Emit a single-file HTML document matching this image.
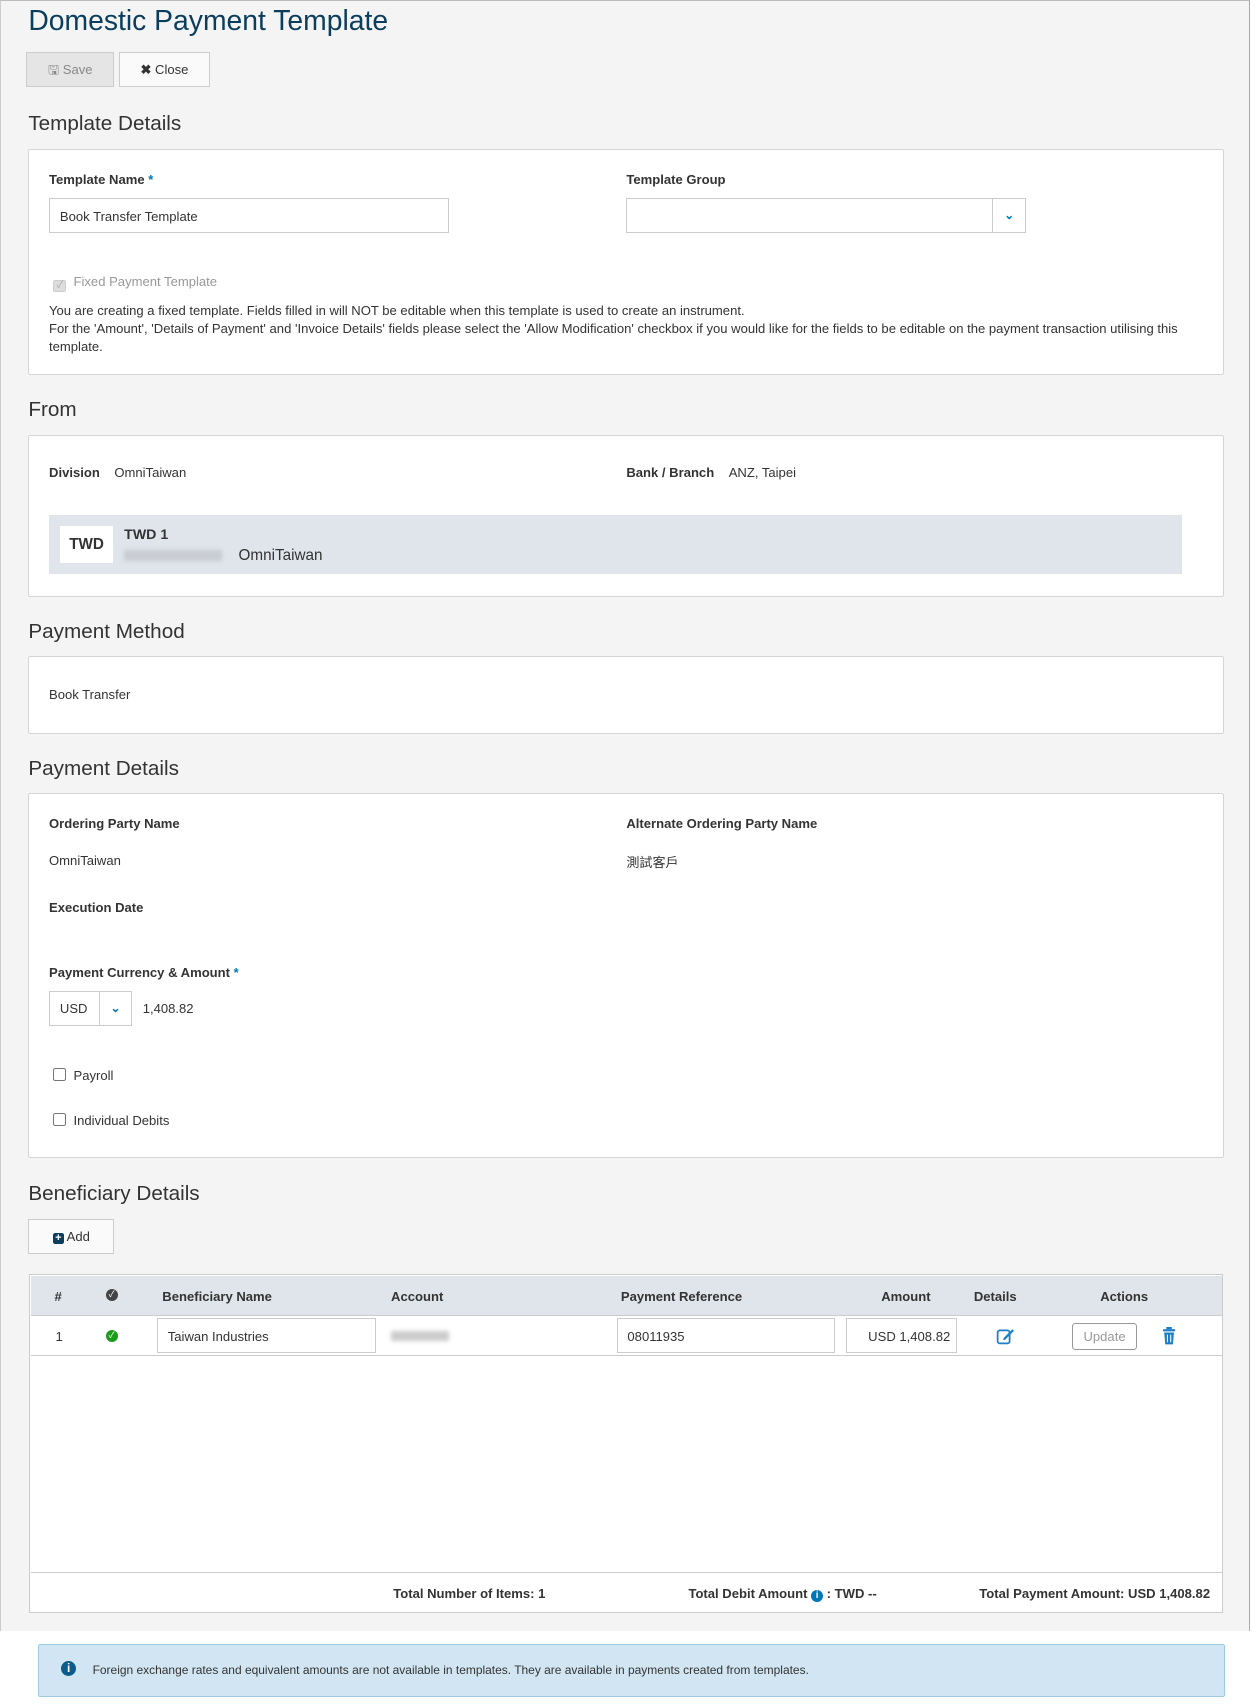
<!DOCTYPE html>
<html><head><meta charset="utf-8"><style>
html,body{margin:0;padding:0;background:#fff;}
body{width:1256px;height:1708px;overflow:hidden;font-family:"Liberation Sans","Noto Sans CJK TC",sans-serif;color:#333;}
#w{zoom:1.0893;position:relative;width:1153px;height:1568px;}
.pg{position:absolute;left:0;top:0;width:1146px;height:1496px;background:#f4f4f4;border-top:1px solid #bbb;border-right:1px solid #aaa;border-left:1px solid #ccc;}
.a{position:absolute;white-space:nowrap;}
.h{font-size:19px;color:#333;margin-top:2px;}
.panel{position:absolute;left:26px;width:1096px;background:#fff;border:1px solid #d5d5d5;border-radius:2px;}
.lb{font-size:12px;font-weight:bold;color:#333;margin-top:1px;}
.t{font-size:12px;color:#333;margin-top:1px;}
.inp{position:absolute;background:#fff;border:1px solid #ccc;box-sizing:border-box;margin-top:0;}
.btn{position:absolute;box-sizing:border-box;border:1px solid #ccc;font-size:12px;text-align:center;}
.star{color:#0077b6;}
.cb{display:inline-block;width:10px;height:10px;border:1px solid #777;border-radius:2px;background:#fff;vertical-align:-1px;}
</style></head><body><div id="w">
<div class="pg"></div>
<div class="a" style="left:26px;top:5px;font-size:26px;color:#0b3d5c;">Domestic Payment Template</div>
<div class="btn" style="left:24px;top:48px;width:81px;height:32px;line-height:31px;background:#e5e5e5;color:#888;">🖫 Save</div>
<div class="btn" style="left:109px;top:48px;width:84px;height:32px;line-height:31px;background:#fafafa;color:#333;"><b>✖</b> Close</div>

<div class="a h" style="left:26px;top:101px;">Template Details</div>
<div class="panel" style="top:137px;height:205px;"></div>
<div class="a lb" style="left:45px;top:157px;">Template Name <span class="star">*</span></div>
<div class="inp" style="left:45px;top:182px;width:367px;height:32px;"></div>
<div class="a t" style="left:55px;top:191px;">Book Transfer Template</div>
<div class="a lb" style="left:575px;top:157px;">Template Group</div>
<div class="inp" style="left:575px;top:182px;width:367px;height:32px;"></div>
<div class="inp" style="left:911px;top:182px;width:31px;height:32px;text-align:center;line-height:30px;color:#0077b6;font-size:11px;font-weight:bold;">&#8964;</div>
<div class="a t" style="left:49px;top:251px;color:#999;"><span class="cb" style="border-color:#ccc;background:#ddd;color:#aaa;font-size:9px;line-height:10px;text-align:center;">✓</span>&nbsp; Fixed Payment Template</div>
<div class="a t" style="left:45px;top:276px;line-height:16.5px;white-space:normal;width:1040px;">You are creating a fixed template. Fields filled in will NOT be editable when this template is used to create an instrument.<br>For the 'Amount', 'Details of Payment' and 'Invoice Details' fields please select the 'Allow Modification' checkbox if you would like for the fields to be editable on the payment transaction utilising this template.</div>

<div class="a h" style="left:26px;top:363px;">From</div>
<div class="panel" style="top:399px;height:147px;"></div>
<div class="a t" style="left:45px;top:426px;"><b>Division</b>&nbsp;&nbsp;&nbsp;&nbsp;OmniTaiwan</div>
<div class="a t" style="left:575px;top:426px;"><b>Bank / Branch</b>&nbsp;&nbsp;&nbsp;&nbsp;ANZ, Taipei</div>
<div class="a" style="left:45px;top:473px;width:1040px;height:54px;background:#dfe5eb;"></div>
<div class="a" style="left:55px;top:483px;width:49px;height:34px;background:#fff;text-align:center;line-height:35px;font-weight:bold;font-size:14px;">TWD</div>
<div class="a" style="left:114px;top:484px;font-weight:bold;font-size:13px;">TWD 1</div>
<div class="a" style="left:114px;top:505px;width:90px;height:10px;background:#c8ccd2;filter:blur(2px);"></div>
<div class="a" style="left:219px;top:502px;font-size:14px;">OmniTaiwan</div>

<div class="a h" style="left:26px;top:567px;">Payment Method</div>
<div class="panel" style="top:602px;height:70px;"></div>
<div class="a t" style="left:45px;top:630px;">Book Transfer</div>

<div class="a h" style="left:26px;top:693px;">Payment Details</div>
<div class="panel" style="top:728px;height:333px;"></div>
<div class="a lb" style="left:45px;top:748px;">Ordering Party Name</div>
<div class="a lb" style="left:575px;top:748px;">Alternate Ordering Party Name</div>
<div class="a t" style="left:45px;top:782px;">OmniTaiwan</div>
<div class="a t" style="left:575px;top:781px;">測試客戶</div>
<div class="a lb" style="left:45px;top:825px;">Execution Date</div>
<div class="a lb" style="left:45px;top:885px;">Payment Currency &amp; Amount <span class="star">*</span></div>
<div class="inp" style="left:45px;top:910px;width:76px;height:32px;"></div>
<div class="inp" style="left:91px;top:910px;width:30px;height:32px;text-align:center;line-height:30px;color:#0077b6;font-size:11px;font-weight:bold;">&#8964;</div>
<div class="a t" style="left:55px;top:918px;">USD</div>
<div class="a t" style="left:131px;top:918px;">1,408.82</div>
<div class="a t" style="left:49px;top:979px;"><span class="cb"></span>&nbsp; Payroll</div>
<div class="a t" style="left:49px;top:1021px;"><span class="cb"></span>&nbsp; Individual Debits</div>

<div class="a h" style="left:26px;top:1083px;">Beneficiary Details</div>
<div class="btn" style="left:26px;top:1119px;width:79px;height:32px;line-height:31px;background:#fafafa;"><span style="display:inline-block;width:10px;height:10px;background:#0b3d5c;color:#fff;font-size:10px;line-height:10px;border-radius:2px;font-weight:bold">+</span> Add</div>

<div class="a" style="left:27px;top:1170px;width:1094px;height:309px;background:#fff;border:1px solid #ccc;"></div>
<div class="a" style="left:28px;top:1171px;width:1094px;height:36px;background:#dfe5ea;border-bottom:1px solid #ccc;"></div>
<div class="a lb" style="left:50px;top:1182px;">#</div>
<div class="a" style="left:97px;top:1183px;width:11px;height:11px;border-radius:50%;background:#444;color:#fff;font-size:8px;text-align:center;line-height:11px;">✓</div>
<div class="a lb" style="left:149px;top:1182px;">Beneficiary Name</div>
<div class="a lb" style="left:359px;top:1182px;">Account</div>
<div class="a lb" style="left:570px;top:1182px;">Payment Reference</div>
<div class="a lb" style="left:809px;top:1182px;">Amount</div>
<div class="a lb" style="left:894px;top:1182px;">Details</div>
<div class="a lb" style="left:1010px;top:1182px;">Actions</div>
<div class="a" style="left:28px;top:1244px;width:1094px;height:1px;background:#ccc;"></div>
<div class="a t" style="left:51px;top:1219px;">1</div>
<div class="a" style="left:97px;top:1221px;width:11px;height:11px;border-radius:50%;background:#1a9c1a;color:#fff;font-size:8px;text-align:center;line-height:11px;">✓</div>
<div class="inp" style="left:144px;top:1210px;width:201px;height:32px;"></div>
<div class="a t" style="left:154px;top:1219px;">Taiwan Industries</div>
<div class="a" style="left:359px;top:1222px;width:53px;height:9px;background:#ccc;filter:blur(2px);"></div>
<div class="inp" style="left:566px;top:1210px;width:201px;height:32px;"></div>
<div class="a t" style="left:576px;top:1219px;">08011935</div>
<div class="inp" style="left:777px;top:1210px;width:102px;height:32px;"></div>
<div class="a t" style="left:797px;top:1219px;">USD 1,408.82</div>
<svg class="a" style="left:914px;top:1217px" width="18" height="18" viewBox="0 0 18 18"><rect x="1.5" y="4" width="11" height="12" rx="2" fill="none" stroke="#1a7fc4" stroke-width="1.6"/><path d="M7 11 L15 3 L16.5 4.5 L8.5 12.5 L6.5 13 Z" fill="#1a7fc4"/></svg>
<div class="btn" style="left:984px;top:1215px;width:60px;height:24px;line-height:23px;color:#999;border-color:#999;border-radius:3px;">Update</div>
<svg class="a" style="left:1067px;top:1218px" width="13" height="17" viewBox="0 0 13 17"><rect x="1" y="2" width="11" height="2" fill="#1a7fc4"/><rect x="4" y="0" width="5" height="2" fill="#1a7fc4"/><path d="M2 5h9l-1 11H3z" fill="#1a7fc4"/><path d="M5 7v7M8 7v7" stroke="#fff" stroke-width="1"/></svg>
<div class="a" style="left:28px;top:1443px;width:1094px;height:1px;background:#ccc;"></div>
<div class="a lb" style="left:361px;top:1455px;">Total Number of Items: 1</div>
<div class="a lb" style="left:632px;top:1455px;">Total Debit Amount <span style="display:inline-block;width:11px;height:11px;border-radius:50%;background:#0077b6;color:#fff;font-size:9px;text-align:center;line-height:11px;">i</span> : TWD --</div>
<div class="a lb" style="left:899px;top:1455px;">Total Payment Amount: USD 1,408.82</div>

<div class="a" style="left:35px;top:1509px;width:1088px;height:47px;background:#d1e6f2;border:1px solid #9ccbe6;border-radius:2px;"></div>
<div class="a" style="left:56px;top:1525px;width:14px;height:14px;border-radius:50%;background:#0b5c8c;color:#fff;font-size:11px;font-weight:bold;text-align:center;line-height:14px;">i</div>
<div class="a" style="left:85px;top:1527px;font-size:11px;color:#333;">Foreign exchange rates and equivalent amounts are not available in templates. They are available in payments created from templates.</div>
</div></body></html>
